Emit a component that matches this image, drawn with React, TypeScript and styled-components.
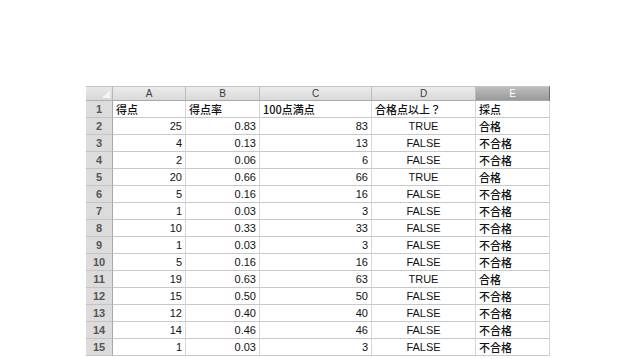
import React from "react";
import styled, { createGlobalStyle } from "styled-components";

const Global = createGlobalStyle`
  html, body { margin: 0; padding: 0; background: #ffffff; overflow: hidden; }
  body { font-family: "Liberation Sans", Arial, "Noto Sans CJK JP", sans-serif; }
`;

const Page = styled.div`
  width: 638px;
  height: 359px;
  padding: 86px 0 0 86px;
  box-sizing: border-box;
  overflow: hidden;
`;

const Sheet = styled.div`
  display: grid;
  grid-template-columns: 27px 73px 74px 112px 104px 74px;
  grid-auto-rows: 17px;
  grid-template-rows: 15px;
  width: 464px;
`;

const Corner = styled.div`
  position: relative;
  background: linear-gradient(#e8e8e8, #d8d8d8);
  border-right: 1px solid #b8b8b8;
  border-bottom: 1px solid #b0b0b0;
  border-top: 1px solid #c4c4c4;
  box-sizing: border-box;
  &::after {
    content: "";
    position: absolute;
    right: 2px;
    bottom: 2px;
    width: 0;
    height: 0;
    border-left: 8px solid transparent;
    border-bottom: 8px solid #f6f6f6;
  }
`;

const ColHead = styled.div<{ $sel?: boolean }>`
  display: flex;
  align-items: center;
  justify-content: center;
  box-sizing: border-box;
  border-top: 1px solid #c4c4c4;
  border-right: 1px solid ${(p) => (p.$sel ? "#6e6e6e" : "#bcbcbc")};
  border-bottom: 1px solid #a8a8a8;
  background: ${(p) =>
    p.$sel ? "linear-gradient(#bdbdbd, #9a9a9a)" : "linear-gradient(#ececec, #d9d9d9)"};
  color: ${(p) => (p.$sel ? "#ffffff" : "#3c3c3c")};
  font-size: 10px;
  line-height: 1;
  padding-top: 1px;
`;

const RowHead = styled.div`
  display: flex;
  align-items: center;
  justify-content: center;
  box-sizing: border-box;
  background: #dcdcdc;
  border-right: 1px solid #a8a8a8;
  border-bottom: 1px solid #c4c4c4;
  color: #555555;
  font-size: 11px;
  font-weight: bold;
`;

const Cell = styled.div<{ $align: "left" | "right" | "center"; $jp?: boolean }>`
  display: flex;
  align-items: center;
  justify-content: ${(p) =>
    p.$align === "left" ? "flex-start" : p.$align === "right" ? "flex-end" : "center"};
  box-sizing: border-box;
  padding: 0 3px;
  border-right: 1px solid #d6d6d6;
  border-bottom: 1px solid #c8c8c8;
  color: #111111;
  font-size: 11px;
  font-weight: ${(p) => (p.$jp ? 500 : "normal")};
  font-family: ${(p) =>
    p.$jp
      ? '"Noto Sans CJK JP", "Liberation Sans", sans-serif'
      : '"Liberation Sans", Arial, "Noto Sans CJK JP", sans-serif'};
  white-space: nowrap;
  overflow: hidden;
`;

type Row = [string, string, string, string, string];

const header: Row = ["得点", "得点率", "100点満点", "合格点以上？", "採点"];

const data: Row[] = [
  ["25", "0.83", "83", "TRUE", "合格"],
  ["4", "0.13", "13", "FALSE", "不合格"],
  ["2", "0.06", "6", "FALSE", "不合格"],
  ["20", "0.66", "66", "TRUE", "合格"],
  ["5", "0.16", "16", "FALSE", "不合格"],
  ["1", "0.03", "3", "FALSE", "不合格"],
  ["10", "0.33", "33", "FALSE", "不合格"],
  ["1", "0.03", "3", "FALSE", "不合格"],
  ["5", "0.16", "16", "FALSE", "不合格"],
  ["19", "0.63", "63", "TRUE", "合格"],
  ["15", "0.50", "50", "FALSE", "不合格"],
  ["12", "0.40", "40", "FALSE", "不合格"],
  ["14", "0.46", "46", "FALSE", "不合格"],
  ["1", "0.03", "3", "FALSE", "不合格"],
];

const cols = ["A", "B", "C", "D", "E"];
const aligns: ("left" | "right" | "center")[] = ["right", "right", "right", "center", "left"];

export default function App() {
  return (
    <>
      <Global />
      <Page>
        <Sheet>
          <Corner />
          {cols.map((c) => (
            <ColHead key={c} $sel={c === "E"}>
              {c}
            </ColHead>
          ))}
          <RowHead>1</RowHead>
          {header.map((h, i) => (
            <Cell key={"h" + i} $align="left" $jp>
              {h}
            </Cell>
          ))}
          {data.map((r, ri) => (
            <React.Fragment key={ri}>
              <RowHead>{ri + 2}</RowHead>
              {r.map((v, ci) => (
                <Cell key={ci} $align={aligns[ci]} $jp={ci === 4}>
                  {v}
                </Cell>
              ))}
            </React.Fragment>
          ))}
        </Sheet>
      </Page>
    </>
  );
}
